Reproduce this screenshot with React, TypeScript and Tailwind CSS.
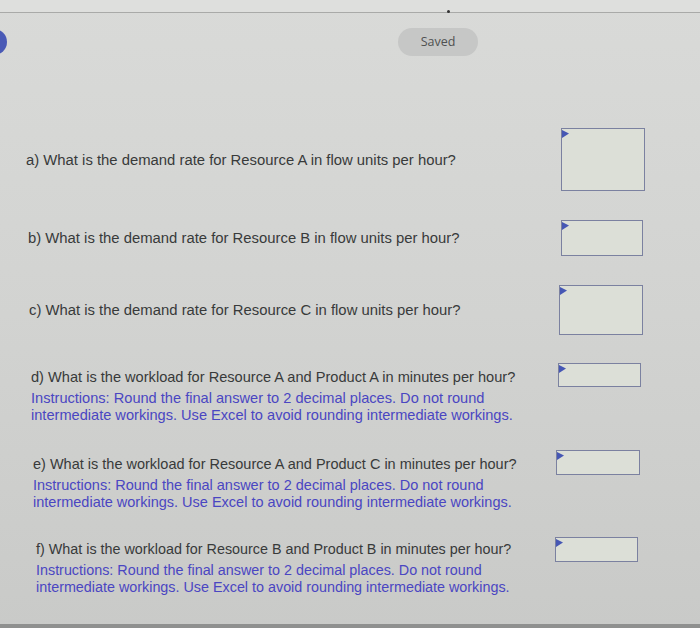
import React from "react";

const ink = "text-[#383a3a]";

function Box({ w, h }: { w: number; h: number }) {
  return (
    <div
      className="relative shrink-0 border-[1.5px] border-[#7b81a0] bg-[#dcdfd7]"
      style={{ width: w, height: h }}
    >
      <svg className="absolute left-0 top-0" width="8" height="10" viewBox="0 0 8 10">
        <polygon points="0,1 7,4.5 0,9" fill="#4657b4" />
      </svg>
    </div>
  );
}

const instr =
  "Instructions: Round the final answer to 2 decimal places. Do not round";
const instr2 =
  "intermediate workings. Use Excel to avoid rounding intermediate workings.";

export default function App() {
  return (
    <div
      className="relative flex h-[628px] w-[700px] flex-col overflow-hidden bg-gradient-to-b from-[#d9dad8] via-[#d2d3d1] to-[#c9cac8]"
      style={{ fontFamily: '"Liberation Sans", Arial, sans-serif' }}
    >
      {/* top strip */}
      <div className="relative h-[13px] shrink-0 border-b border-[#a9aaa8] bg-[#dedfdd]">
        <div className="absolute left-[447px] top-[10px] h-[3px] w-[3px] rounded-full bg-[#333]" />
      </div>

      {/* header */}
      <div className="flex shrink-0 items-center pt-[15px]">
        <div className="-ml-[19px] h-[26px] w-[26px] shrink-0 rounded-full bg-[#4a5ab6]" />
        <div
          className="ml-[391px] flex h-[28px] w-[80px] items-center justify-center rounded-full bg-[#c6c7c6] text-[12.5px] text-[#4f5151]"
          style={{ fontFamily: '"Open Sans", sans-serif' }}
        >
          Saved
        </div>
      </div>

      <div className={`flex flex-col ${ink}`}>
        {/* a */}
        <div className="mt-[72px] flex items-center justify-between pl-[26px] pr-[55px] text-[14.85px]">
          <p className="leading-[18px]">
            a) What is the demand rate for Resource A in flow units per hour?
          </p>
          <Box w={84} h={63} />
        </div>

        {/* b */}
        <div className="mt-[29px] flex items-center justify-between pl-[28px] pr-[57px] text-[14.85px]">
          <p className="leading-[18px]">
            b) What is the demand rate for Resource B in flow units per hour?
          </p>
          <Box w={82} h={36} />
        </div>

        {/* c */}
        <div className="mt-[29px] flex items-center justify-between pl-[29px] pr-[57px] text-[14.85px]">
          <p className="leading-[18px]">
            c) What is the demand rate for Resource C in flow units per hour?
          </p>
          <Box w={84} h={50} />
        </div>

        {/* d */}
        <div className="mt-[28px] flex items-start justify-between pl-[31px] pr-[59px] text-[14.6px]">
          <div className="pt-[5px]">
            <p className="leading-[18px]">
              d) What is the workload for Resource A and Product A in minutes per hour?
            </p>
            <p className="mt-[4px] leading-[17px] text-[#4a46c2]">
              {instr}
              <br />
              {instr2}
            </p>
          </div>
          <Box w={83} h={24} />
        </div>

        {/* e */}
        <div className="mt-[26px] flex items-start justify-between pl-[33px] pr-[60px] text-[14.5px]">
          <div className="pt-[5px]">
            <p className="leading-[18px]">
              e) What is the workload for Resource A and Product C in minutes per hour?
            </p>
            <p className="mt-[4px] leading-[17px] text-[#4a46c2]">
              {instr}
              <br />
              {instr2}
            </p>
          </div>
          <Box w={84} h={25} />
        </div>

        {/* f */}
        <div className="mt-[26px] flex items-start justify-between pl-[36px] pr-[62px] text-[14.35px]">
          <div className="pt-[3px]">
            <p className="leading-[18px]">
              f) What is the workload for Resource B and Product B in minutes per hour?
            </p>
            <p className="mt-[4px] leading-[17px] text-[#4a46c2]">
              {instr}
              <br />
              {instr2}
            </p>
          </div>
          <Box w={83} h={25} />
        </div>
      </div>

      <div className="flex-1" />
      <div className="h-[4px] shrink-0 bg-[#8f908f]" />
    </div>
  );
}
